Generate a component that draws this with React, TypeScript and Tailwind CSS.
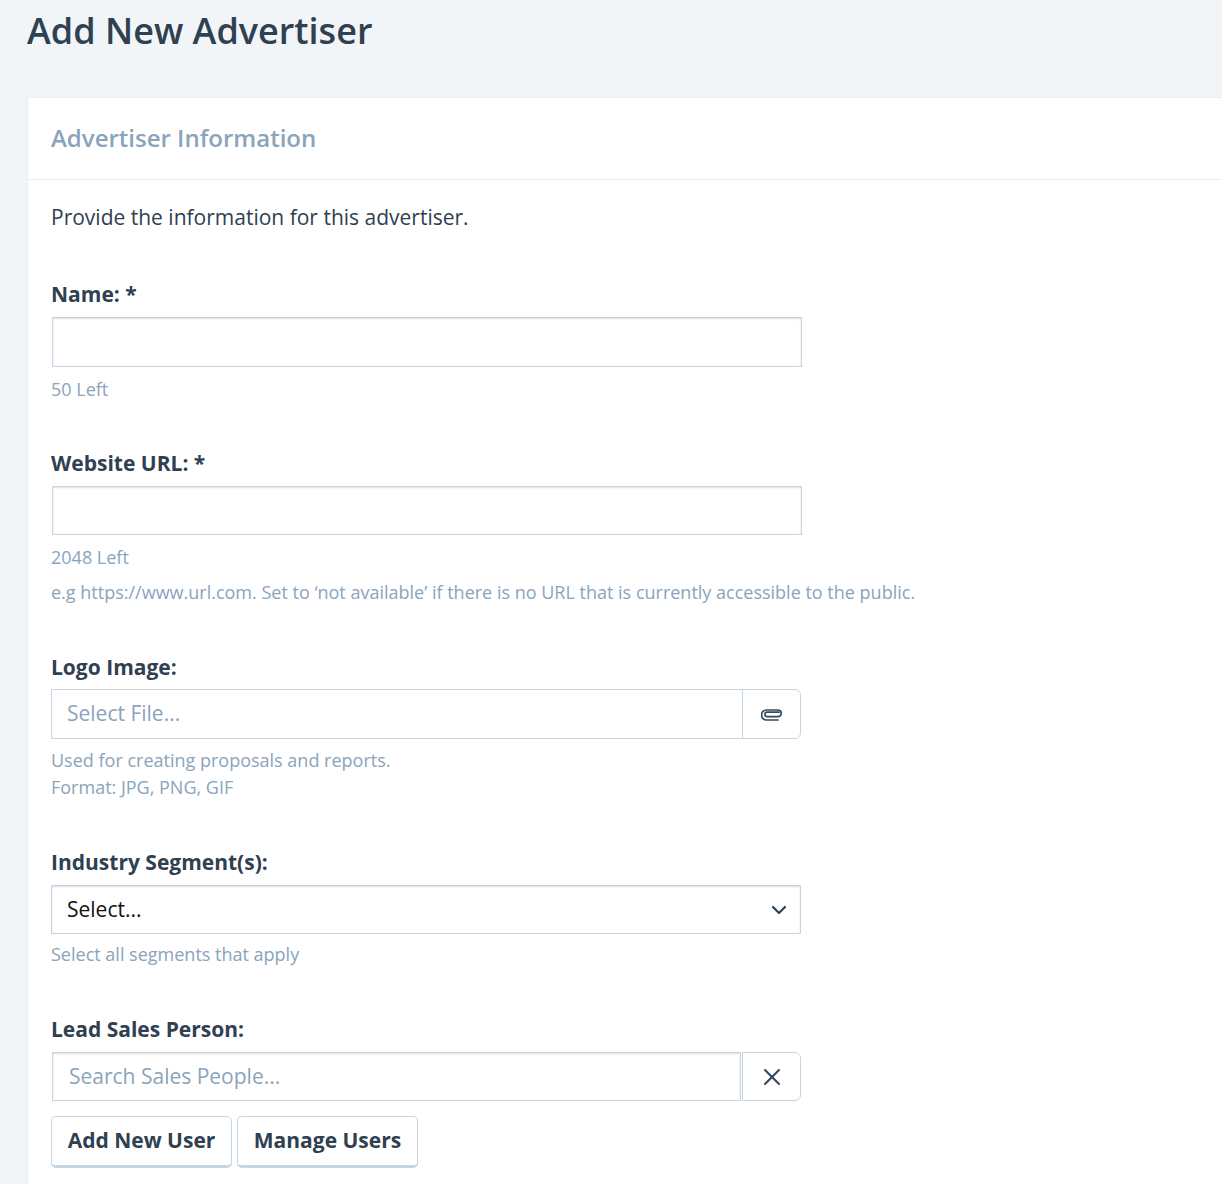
import { ChevronDown, X } from 'lucide-react'

function PaperclipIcon() {
  return (
    <svg className="mt-px" width="22" height="12" viewBox="0 0 22 12" fill="none" stroke="#34495e" strokeWidth="1.7" strokeLinecap="round" strokeLinejoin="round">
      <path d="M18 3.2H6.2a2.1 2.1 0 0 0 0 4.4H17a3 3 0 0 0 0-6.6H5.5a4.6 4.6 0 0 0 0 10H17" />
    </svg>
  )
}

const inputClass =
  'block w-[750px] ml-px border border-[#c5d5e4] bg-white shadow-[inset_0_1px_2px_rgba(52,73,94,0.18)]'

export default function App() {
  return (
    <div className="h-[1184px] overflow-hidden bg-[#f1f5f8] pl-[27px] font-['Open_Sans',sans-serif] text-[#2f4050]">
      <h1 className="h-[97px] pt-[6px] text-[36px] leading-[50px] font-semibold text-[#2f4050]">Add New Advertiser</h1>

      <div className="h-[1087px] border border-r-0 border-b-0 border-[#e8edf2] bg-white">
        <div className="flex h-[82px] items-center border-b border-[#e8edf2] pb-[2px] pl-[23px]">
          <h2 className="text-[24px] font-semibold text-[#8aa4bb]">Advertiser Information</h2>
        </div>

        <div className="pl-[23px]">
          <p className="pt-[21px] text-[21px] leading-[32px]">Provide the information for this advertiser.</p>

          <label className="mt-[45px] block text-[21px] leading-[32px] font-bold">Name: *</label>
          <input type="text" className={`mt-[7px] h-[50px] ${inputClass}`} />
          <p className="mt-[9px] text-[18px] leading-[27px] text-[#8aa4bb]">50 Left</p>

          <label className="mt-[44px] block text-[21px] leading-[32px] font-bold">Website URL: *</label>
          <input type="text" className={`mt-[7px] h-[49px] ${inputClass}`} />
          <p className="mt-[9px] text-[18px] leading-[27px] text-[#8aa4bb]">2048 Left</p>
          <p className="mt-[8px] text-[18px] leading-[27px] text-[#8aa4bb]">
            e.g https://www.url.com. Set to ‘not available’ if there is no URL that is currently accessible to the public.
          </p>

          <label className="mt-[45px] block text-[21px] leading-[32px] font-bold">Logo Image:</label>
          <div className="mt-[6px] flex h-[50px] w-[750px] rounded-r-[6px] border border-[#c5d5e4] bg-white">
            <div className="flex flex-1 items-center border-r border-[#c5d5e4] pl-[15px] text-[21px] text-[#8aa4bb]">Select File...</div>
            <div className="flex w-[57px] items-center justify-center">
              <PaperclipIcon />
            </div>
          </div>
          <p className="mt-[8px] text-[18px] leading-[27px] text-[#8aa4bb]">Used for creating proposals and reports.</p>
          <p className="text-[18px] leading-[27px] text-[#8aa4bb]">Format: JPG, PNG, GIF</p>

          <label className="mt-[45px] block text-[21px] leading-[32px] font-bold">Industry Segment(s):</label>
          <div className="mt-[7px] flex h-[49px] w-[750px] items-center justify-between border border-[#c5d5e4] bg-white pr-[9px] pl-[15px] text-[21px] text-[#111] shadow-[inset_0_1px_2px_rgba(52,73,94,0.18)]">
            <span>Select...</span>
            <ChevronDown size={24} strokeWidth={2.2} className="text-[#2f4050]" />
          </div>
          <p className="mt-[7px] text-[18px] leading-[27px] text-[#8aa4bb]">Select all segments that apply</p>

          <label className="mt-[45px] block text-[21px] leading-[32px] font-bold">Lead Sales Person:</label>
          <div className="mt-[7px] flex h-[49px] w-[750px]">
            <input
              type="text"
              placeholder="Search Sales People..."
              className="ml-px h-full w-[689px] border border-[#c5d5e4] bg-white pb-[2px] pl-[16px] text-[21px] shadow-[inset_0_1px_2px_rgba(52,73,94,0.18)] placeholder:text-[#8aa4bb]"
            />
            <div className="ml-px flex flex-1 items-center justify-center rounded-r-[6px] border border-[#c5d5e4] bg-white">
              <X size={28} strokeWidth={1.8} className="text-[#34495e]" />
            </div>
          </div>

          <div className="mt-[15px] flex gap-[5px]">
            <button className="h-[52px] w-[181px] rounded-[5px] border border-b-[3px] border-[#c5d5e4] bg-white text-[21px] font-bold text-[#2f4050]">Add New User</button>
            <button className="h-[52px] w-[181px] rounded-[5px] border border-b-[3px] border-[#c5d5e4] bg-white text-[21px] font-bold text-[#2f4050]">Manage Users</button>
          </div>
        </div>
      </div>
    </div>
  )
}
